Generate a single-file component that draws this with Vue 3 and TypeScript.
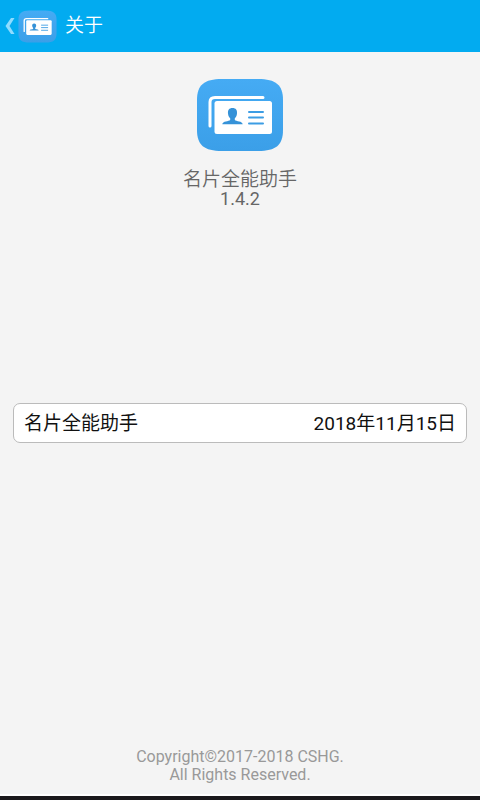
<script setup lang="ts">
import { defineComponent, h } from 'vue'

const appName = '名片全能助手'
const version = '1.4.2'
const releaseDate = '2018年11月15日'

const CardLogo = defineComponent({
  props: { gradientId: { type: String, required: true } },
  setup(props) {
    return () =>
      h('svg', { viewBox: '0 0 88 74', preserveAspectRatio: 'none', 'aria-hidden': 'true' }, [
        h('defs', [
          h('linearGradient', { id: props.gradientId, x1: 0, y1: 0, x2: 0, y2: 1 }, [
            h('stop', { offset: 0, 'stop-color': '#45abf4' }),
            h('stop', { offset: 1, 'stop-color': '#3b9fe8' }),
          ]),
        ]),
        h('path', {
          d: 'M26 1H62C80 1 87 7 87 22V52C87 67 80 73 62 73H26C8 73 1 67 1 52V22C1 7 8 1 26 1Z',
          fill: `url(#${props.gradientId})`,
        }),
        h('path', {
          d: 'M14 48V24Q14 19.500 19 19.500H67',
          fill: 'none',
          stroke: '#fff',
          'stroke-width': 3,
          'stroke-linecap': 'round',
        }),
        h('rect', { x: 18.5, y: 23, width: 57.5, height: 33, rx: 2.5, fill: '#fff' }),
        h('path', {
          d: 'M36.500 30C40 30 41.300 32.200 41 35.500C40.800 38 39.800 39.400 38.800 40.200V42C40 43.500 46.500 43 46.700 46.200H26.300C26.500 43 33 43.500 34.200 42V40.200C33.200 39.400 32.200 38 32 35.500C31.700 32.200 33 30 36.500 30Z',
          fill: '#3592d8',
        }),
        h('path', {
          d: 'M53 34H67M53 39.500H67M53 45.500H67',
          fill: 'none',
          stroke: '#3c9de4',
          'stroke-width': 2,
          'stroke-linecap': 'round',
        }),
      ])
  },
})
</script>

<template>
  <div class="page">
    <header class="bar">
      <button class="back" type="button" aria-label="返回">
        <svg class="chevron" viewBox="0 0 10 18" aria-hidden="true">
          <path d="M6 1H9.500L4.500 9L9.500 17H6L0.500 9Z" fill="#8fdcff" />
        </svg>
        <CardLogo class="bar-logo" gradient-id="logo-small" />
      </button>
      <h1 class="title">关于</h1>
    </header>

    <main class="content">
      <section class="about">
        <CardLogo class="logo" gradient-id="logo-large" />
        <p class="name">{{ appName }}</p>
        <p class="version">{{ version }}</p>
      </section>

      <section class="release">
        <span>{{ appName }}</span>
        <time datetime="2018-11-15">{{ releaseDate }}</time>
      </section>

      <footer class="copyright">
        <p>Copyright©2017-2018 CSHG.</p>
        <p>All Rights Reserved.</p>
      </footer>
    </main>
    <div class="edge"></div>
  </div>
</template>

<style>
body {
  margin: 0;
  background: #f4f4f4;
}
</style>

<style scoped>
.page {
  display: flex;
  flex-direction: column;
  box-sizing: border-box;
  min-height: 100vh;
  background: #f4f4f4;
  font-family: Roboto, "Noto Sans CJK SC", sans-serif;
}

p,
h1 {
  margin: 0;
  font-weight: 400;
}

.bar {
  display: flex;
  align-items: center;
  gap: 8px;
  height: 52px;
  padding: 0 5px;
  background: #02abf0;
}

.back {
  display: flex;
  align-items: center;
  gap: 3px;
  padding: 0;
  border: 0;
  background: none;
}

.chevron {
  width: 10px;
  height: 18px;
}

.bar-logo {
  width: 39px;
  height: 33px;
}

.title {
  color: #fff;
  font-size: 19px;
  font-weight: 350;
  line-height: 26px;
}

.content {
  display: grid;
  flex: 1;
  grid-template-rows: 1fr auto 1fr;
  padding: 0 13px;
}

.about {
  display: flex;
  flex-direction: column;
  align-items: center;
  padding-top: 26px;
  color: #666;
}

.logo {
  width: 88px;
  height: 74px;
  margin-bottom: 19px;
}

.name {
  font-size: 19px;
  font-weight: 350;
  line-height: 18px;
}

.version {
  font-size: 18px;
  line-height: 20px;
}

.release {
  display: flex;
  align-items: center;
  justify-content: space-between;
  padding: 7px 10px 5px;
  border: 1px solid #bbb;
  border-radius: 7px;
  background: #fff;
  color: #111;
  font-size: 19px;
  line-height: 26px;
}

.copyright {
  align-self: end;
  padding-bottom: 10px;
  color: #999;
  font-size: 16px;
  line-height: 18px;
  text-align: center;
}

.edge {
  height: 4px;
  border-top: 2px solid #fff;
  background: #1b191c;
}
</style>
